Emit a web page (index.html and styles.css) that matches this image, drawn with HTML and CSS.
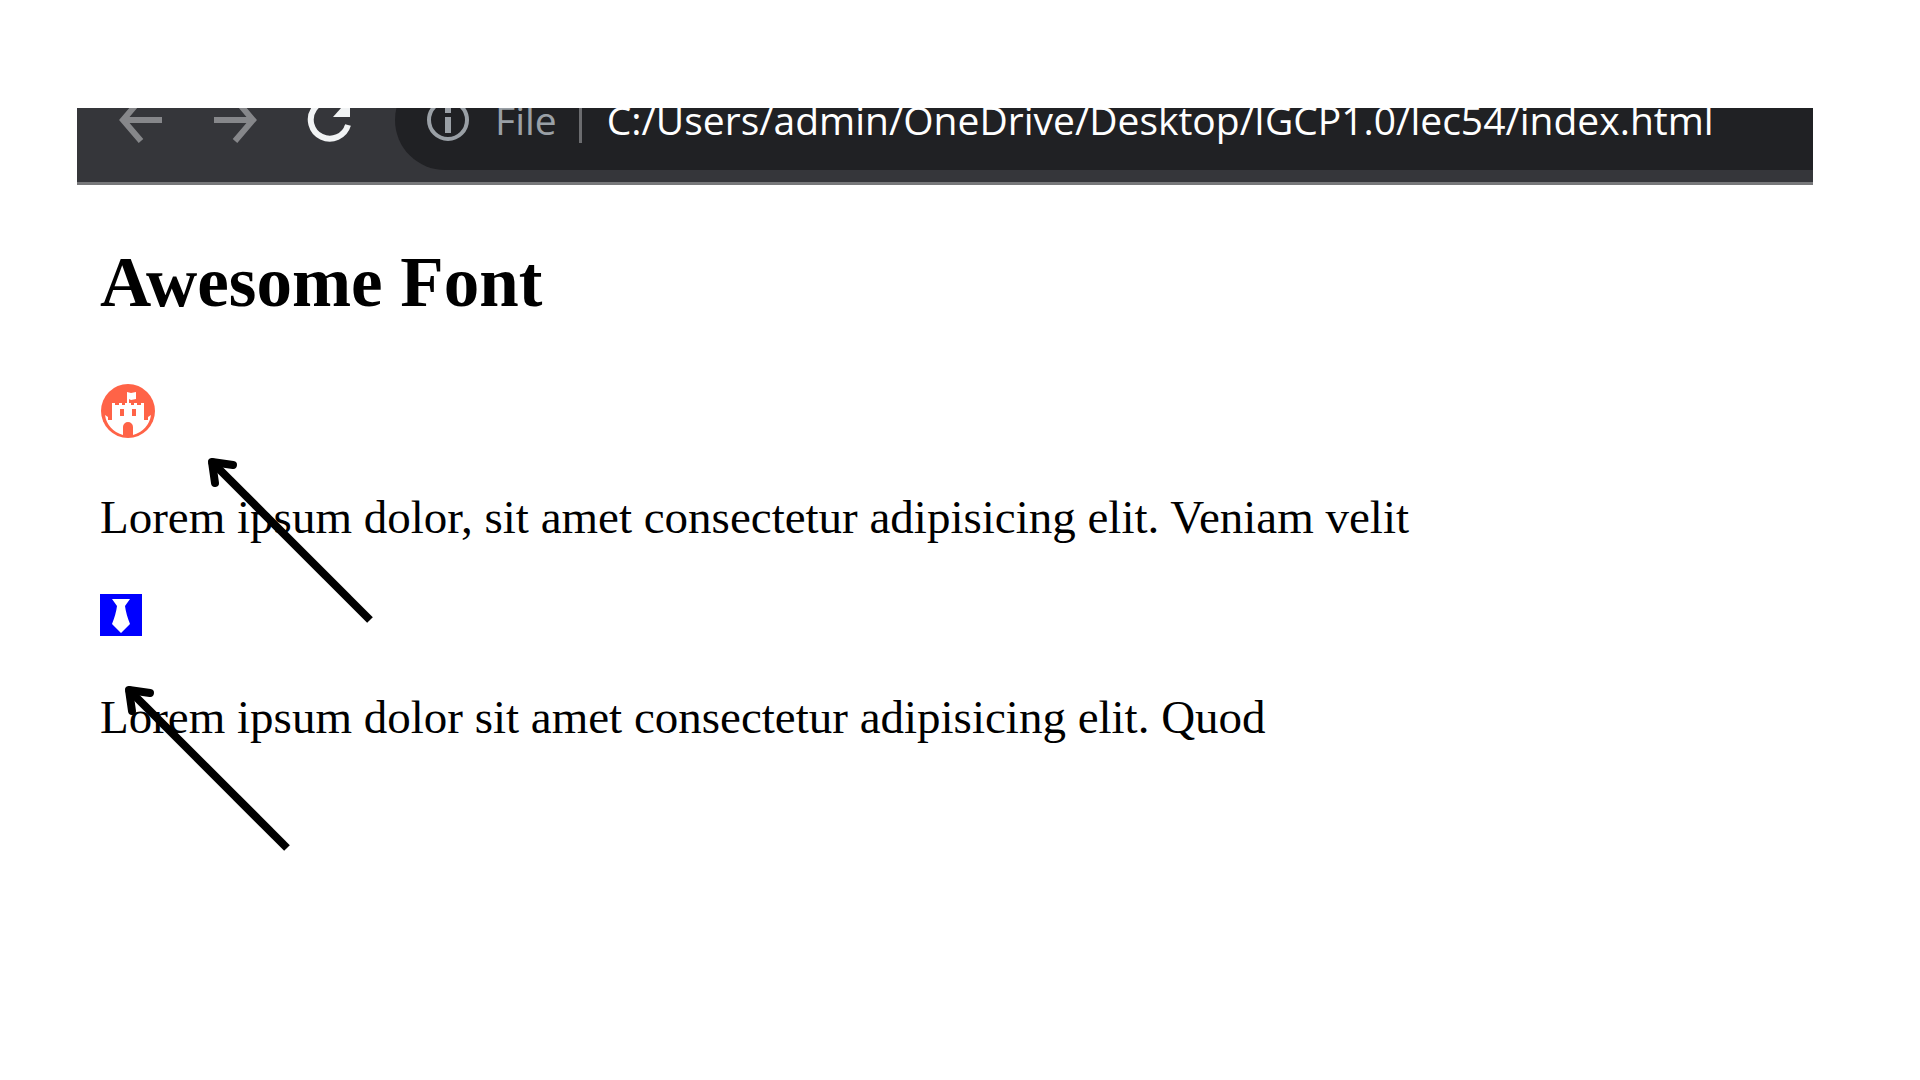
FILE: index.html
```
<!DOCTYPE html>
<html lang="en">
<head>
<meta charset="utf-8">
<title>Awesome Font</title>
<link rel="stylesheet" href="styles.css">
</head>
<body>
<div class="frame">
  <header class="toolbar">
    <nav class="nav" aria-label="Browser navigation">
      <button class="tool dim" type="button" aria-label="Back">
        <svg viewBox="0 0 48 48"><path d="M45 24H6M23 4L6 24L24 45"/></svg>
      </button>
      <button class="tool dim" type="button" aria-label="Forward">
        <svg viewBox="0 0 48 48"><path d="M3 24H42M25 4L42 24L24 45"/></svg>
      </button>
      <button class="tool" type="button" aria-label="Reload">
        <svg viewBox="0 0 48 48"><path d="M43 29A19 19 0 1 1 38 10"/><path class="solid" d="M45 2V21H28Z"/></svg>
      </button>
    </nav>
    <div class="address">
      <svg class="info" viewBox="0 0 48 48"><circle cx="24" cy="24" r="19"/><path class="stem" d="M24 21V37M24 12V17"/></svg>
      <span class="scheme">File</span>
      <span class="divider"></span>
      <span class="url">C:/Users/admin/OneDrive/Desktop/IGCP1.0/lec54/index.html</span>
    </div>
  </header>
  <main class="content">
    <h1 class="title">Awesome Font</h1>
    <div class="row castle-row">
      <svg class="castle" viewBox="0 0 56 56" role="img" aria-label="Castle">
        <circle cx="28" cy="27" r="27"/>
        <path class="cut" d="M5 31L8 33V36H12V19H15V21H19V19H22V21H25V19H27V8L31 9L36 8V15L31 16L29 15V19H31V21H34V19H37V21H41V19H44V36H48V33L51 31A24 24 0 0 1 33 51V43A5 5 0 0 0 23 43V51A24 24 0 0 1 5 31Z"/>
        <path d="M20 25H24V32H20ZM32 25H36V32H32Z"/>
      </svg>
    </div>
    <p class="text">Lorem ipsum dolor, sit amet consectetur adipisicing elit. Veniam velit</p>
    <div class="row tie-row">
      <svg class="tie" viewBox="0 0 42 42" role="img" aria-label="Tie">
        <path d="M0 0H42V42H0Z"/>
        <path class="cut" d="M12 5H30L25 12Q26 20 30 30L21 39L12 30Q16 20 17 12Z"/>
      </svg>
    </div>
    <p class="text">Lorem ipsum dolor sit amet consectetur adipisicing elit. Quod</p>
  </main>
  <svg class="arrow first" viewBox="0 0 180 180"><path d="M9 9L168 168"/><path class="head" d="M13 31L10 10L31 13"/></svg>
  <svg class="arrow second" viewBox="0 0 180 180"><path d="M9 9L168 168"/><path class="head" d="M13 31L10 10L31 13"/></svg>
</div>
</body>
</html>
```
FILE: styles.css
```
body {
  margin: 0;
  background: #fff;
  color: #000;
  font-family: "Liberation Serif", serif;
}

.frame {
  position: relative;
  margin: 108px 107px 0 77px;
  padding-bottom: 160px;
}

.toolbar {
  display: flex;
  height: 74px;
  overflow: hidden;
  background: #35363a;
  border-bottom: 3px solid #77787a;
}

.nav {
  display: flex;
  gap: 46px;
  padding-left: 40px;
  margin-top: -12px;
}

.tool {
  width: 48px;
  height: 48px;
  padding: 0;
  border: 0;
  background: none;
  color: #f1f3f4;
}

.dim {
  color: #86878a;
}

.tool svg,
.info {
  display: block;
  width: 48px;
  height: 48px;
  fill: none;
  stroke: currentColor;
  stroke-width: 6;
}

.tool .solid {
  fill: currentColor;
  stroke: none;
}

.address {
  display: flex;
  flex: 1;
  align-items: center;
  height: 100px;
  margin: -38px 0 0 42px;
  padding-left: 29px;
  border-radius: 50px 0 0 50px;
  background: #202124;
  color: #9aa0a6;
  font: 39px/48px "Open Sans", sans-serif;
  white-space: nowrap;
}

.info {
  flex: none;
  stroke-width: 4;
}

.info .stem {
  stroke-width: 6;
}

.scheme {
  margin-left: 23px;
}

.divider {
  width: 3px;
  height: 46px;
  margin: 0 25px 0 22px;
  background: #6b6c6f;
}

.url {
  color: #fff;
}

.content {
  padding: 57px 24px 0 23px;
}

.title {
  margin: 0;
  font-size: 71px;
  line-height: 80px;
}

.row svg {
  display: block;
}

.castle-row {
  padding: 62px 0 51px;
}

.castle {
  width: 56px;
  height: 56px;
  fill: #ff6347;
}

.tie {
  width: 42px;
  height: 42px;
  fill: #00f;
}

.row .cut {
  fill: #fff;
}

.text {
  margin: 0;
  font-size: 47px;
  line-height: 52px;
}

.tie-row {
  padding: 51px 0 55px;
}

.arrow {
  position: absolute;
  width: 180px;
  height: 180px;
  fill: none;
  stroke: #000;
  stroke-width: 8;
}

.arrow .head {
  stroke-linecap: round;
  stroke-linejoin: round;
}

.first {
  left: 125px;
  top: 344px;
}

.second {
  left: 42px;
  top: 572px;
}
```
